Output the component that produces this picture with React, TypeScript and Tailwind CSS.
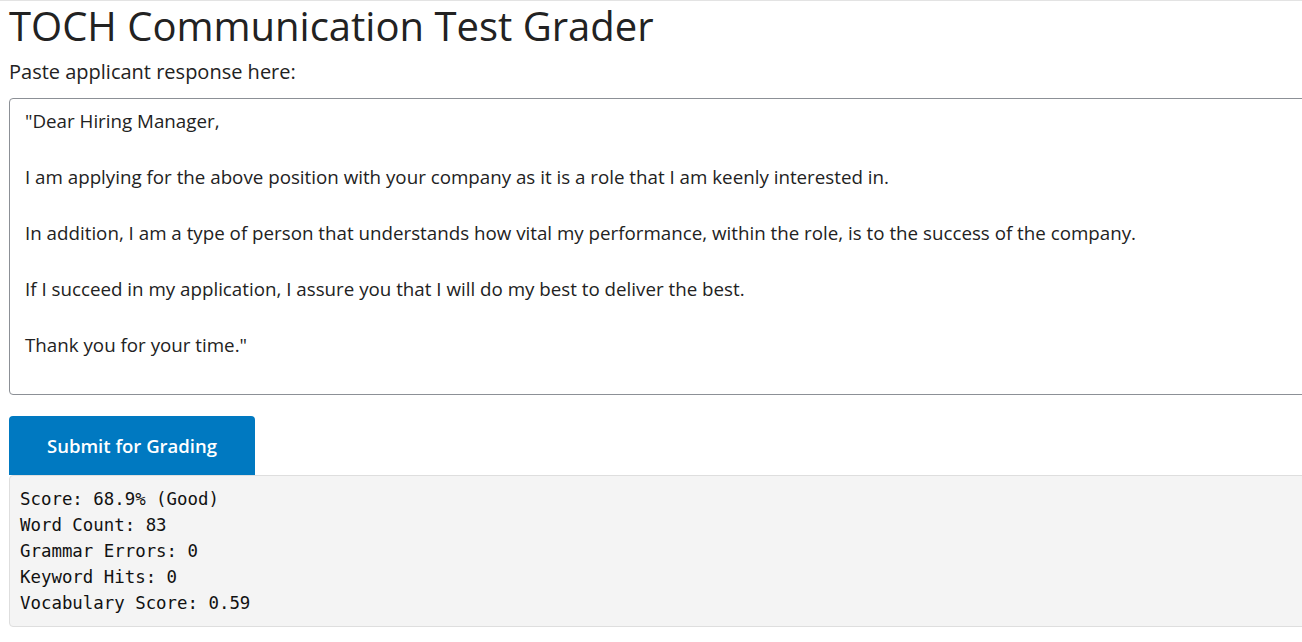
import { useState } from 'react';

const sample = `"Dear Hiring Manager,

I am applying for the above position with your company as it is a role that I am keenly interested in.

In addition, I am a type of person that understands how vital my performance, within the role, is to the success of the company.

If I succeed in my application, I assure you that I will do my best to deliver the best.

Thank you for your time."`;

const result = `Score: 68.9% (Good)
Word Count: 83
Grammar Errors: 0
Keyword Hits: 0
Vocabulary Score: 0.59`;

export default function App() {
  const [text, setText] = useState(sample);

  return (
    <div className="h-[642px] w-full overflow-hidden border-t border-[#e3e3e3] bg-white text-[#222] font-['Open_Sans',sans-serif]">
      <div className="w-[1340px] pl-[9px]">
        <h1 className="text-[40px] leading-[50px] font-normal">TOCH Communication Test Grader</h1>
        <label className="mt-[7px] block text-[20px] leading-[27px]">Paste applicant response here:</label>
        <textarea
          value={text}
          onChange={e => setText(e.target.value)}
          className="mt-[13px] block h-[297px] w-full resize-none rounded border border-[#8c9096] px-[15px] py-[8px] text-[18.75px] leading-[28px] text-[#222] outline-none"
        />
        <button className="mt-[21px] block h-[59px] w-[246px] rounded-t bg-[#0079c1] text-[18.5px] font-semibold text-white">
          Submit for Grading
        </button>
        <pre className="h-[152px] rounded border border-[#dedede] bg-[#f4f4f4] px-[10px] py-[10px] font-['DejaVu_Sans_Mono',monospace] text-[17.4px] leading-[26px] text-[#111]">
          {result}
        </pre>
      </div>
    </div>
  );
}
